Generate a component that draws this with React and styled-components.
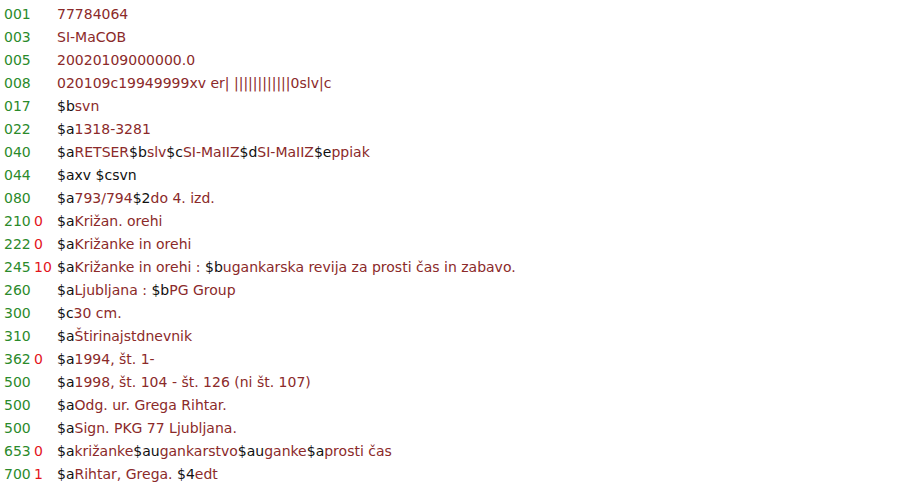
import React from "react"
import styled, { createGlobalStyle } from "styled-components"

const GlobalStyle = createGlobalStyle`
  html, body {
    margin: 0;
    padding: 0;
    background: #fff;
  }
`

const Record = styled.div`
  padding: 3px 0 0 4px;
  font-family: "DejaVu Sans", Verdana, sans-serif;
  font-size: 14px;
  line-height: 23px;
`

const Row = styled.div`
  display: grid;
  grid-template-columns: 30px 23px 1fr;
  white-space: pre;
`

const Tag = styled.span`
  color: #2b8a2b;
`

const Ind = styled.span`
  color: #e3141c;
`

const Code = styled.span`
  color: #111;
`

const Value = styled.span`
  color: ${p => (p.$plain ? "#111" : "#8b2a2a")};
`

const rows = [
  { tag: "001", text: "77784064" },
  { tag: "003", text: "SI-MaCOB" },
  { tag: "005", text: "20020109000000.0" },
  { tag: "008", text: "020109c19949999xv er| ||||||||||||0slv|c" },
  { tag: "017", sub: [["$b", "svn"]] },
  { tag: "022", sub: [["$a", "1318-3281"]] },
  { tag: "040", sub: [["$a", "RETSER"], ["$b", "slv"], ["$c", "SI-MaIIZ"], ["$d", "SI-MaIIZ"], ["$e", "ppiak"]] },
  { tag: "044", sub: [["$a", "xv ", true], ["$c", "svn", true]] },
  { tag: "080", sub: [["$a", "793/794"], ["$2", "do 4. izd."]] },
  { tag: "210", ind: "0", sub: [["$a", "Križan. orehi"]] },
  { tag: "222", ind: "0", sub: [["$a", "Križanke in orehi"]] },
  { tag: "245", ind: "10", sub: [["$a", "Križanke in orehi : "], ["$b", "ugankarska revija za prosti čas in zabavo."]] },
  { tag: "260", sub: [["$a", "Ljubljana : "], ["$b", "PG Group"]] },
  { tag: "300", sub: [["$c", "30 cm."]] },
  { tag: "310", sub: [["$a", "Štirinajstdnevnik"]] },
  { tag: "362", ind: "0", sub: [["$a", "1994, št. 1-"]] },
  { tag: "500", sub: [["$a", "1998, št. 104 - št. 126 (ni št. 107)"]] },
  { tag: "500", sub: [["$a", "Odg. ur. Grega Rihtar."]] },
  { tag: "500", sub: [["$a", "Sign. PKG 77 Ljubljana."]] },
  { tag: "653", ind: "0", sub: [["$a", "križanke"], ["$au", "gankarstvo"], ["$au", "ganke"], ["$a", "prosti čas"]] },
  { tag: "700", ind: "1", sub: [["$a", "Rihtar, Grega. "], ["$4", "edt"]] },
]

export default function App() {
  return (
    <>
      <GlobalStyle />
      <Record>
        {rows.map((r, i) => (
          <Row key={i}>
            <Tag>{r.tag}</Tag>
            <Ind>{r.ind || ""}</Ind>
            <span>
              {r.text && <Value>{r.text}</Value>}
              {r.sub &&
                r.sub.map(([code, val, plain], j) => (
                  <React.Fragment key={j}>
                    <Code>{code}</Code>
                    <Value $plain={plain}>{val}</Value>
                  </React.Fragment>
                ))}
            </span>
          </Row>
        ))}
      </Record>
    </>
  )
}
